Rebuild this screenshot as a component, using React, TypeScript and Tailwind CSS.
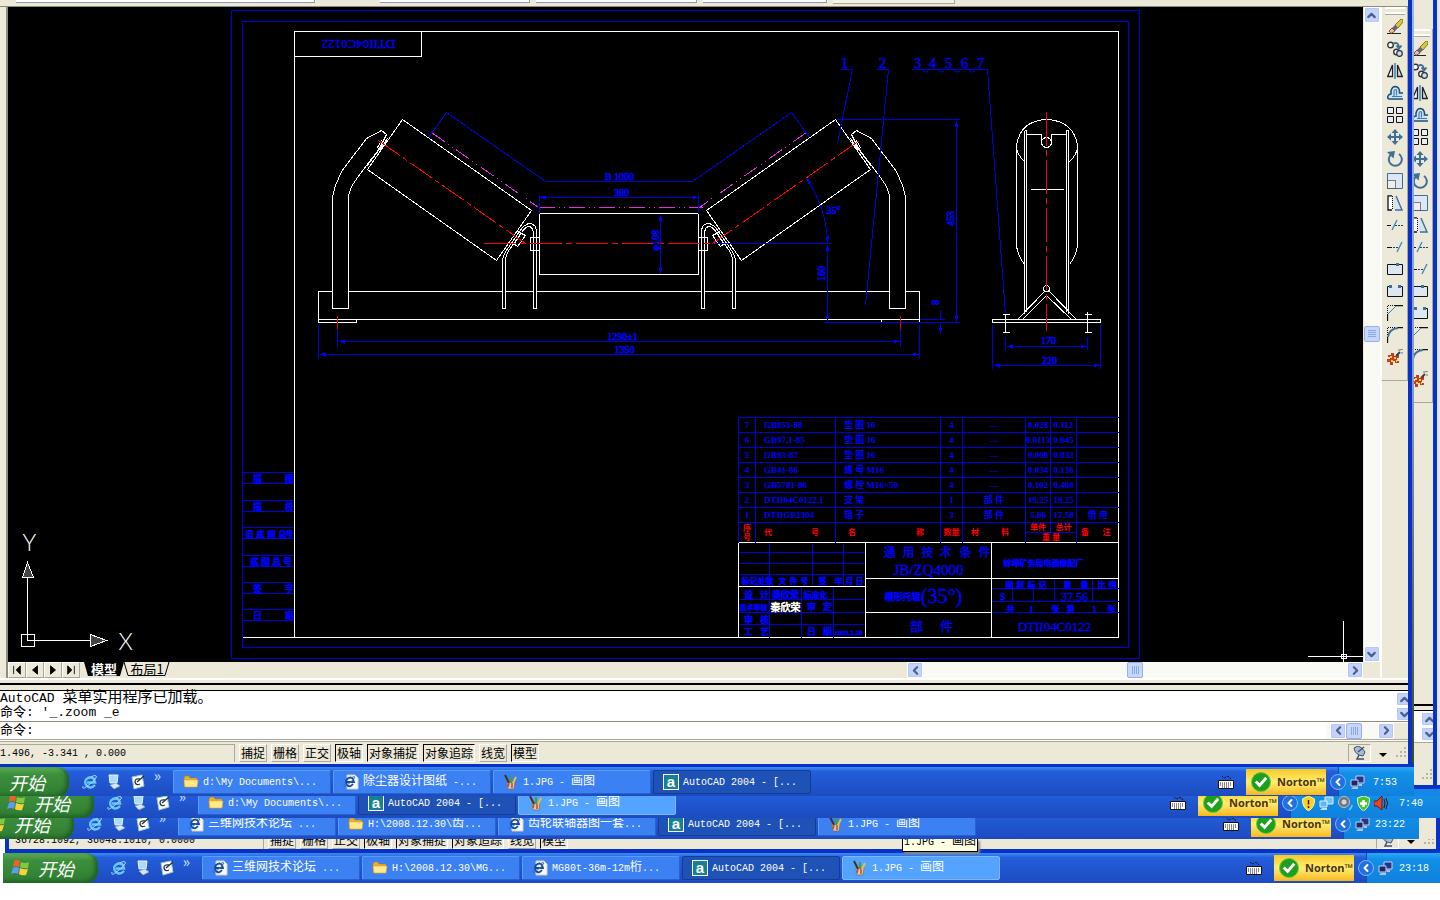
import type { ReactNode } from 'react'
import clsx from 'clsx'
import { ChevronDown, ChevronLeft, ChevronRight, ChevronUp } from 'lucide-react'

const BLUE = '#0000d8'

// Latin runs are set in a narrow mono, Chinese runs a little larger
function Mixed({ text }: { text: string }) {
  const runs = text.split(/([\u3000-\u9fff\uff00-\uffef]+)/).filter(Boolean)
  return (
    <span className="block whitespace-pre font-['Liberation_Mono','Noto_Sans_CJK_SC',monospace] text-xs leading-4">
      {runs.map((run, i) =>
        /[\u3000-\u9fff]/.test(run) ? (
          <span key={i}>{run}</span>
        ) : (
          <span key={i} className="text-[10px]">{run}</span>
        ),
      )}
    </span>
  )
}

/* ---------- CAD drawing ---------- */

type LabelProps = {
  x: number
  y: number
  size?: number
  rotate?: number
  fill?: string
  children: ReactNode
}

function Label({ x, y, size = 10, rotate, fill = '#0000ff', children }: LabelProps) {
  return (
    <text
      x={x}
      y={y}
      fontSize={size}
      fill={fill}
      stroke={fill}
      strokeWidth={size > 11 ? 0.3 : 0.6}
      textAnchor="middle"
      transform={rotate ? `rotate(${rotate} ${x} ${y})` : undefined}
    >
      {children}
    </text>
  )
}

function Spread({ xs, y, text, size = 9 }: { xs: number[]; y: number; text: string; size?: number }) {
  return (
    <>
      {xs.map((x, i) => (
        <Label key={x} x={x} y={y} size={size}>{text[i]}</Label>
      ))}
    </>
  )
}

// Left half of the carrier frame; the right half is its mirror image
function HalfFrame() {
  return (
    <g>
      <path stroke="#fff" d="M318 319H356V322H318Z" />
      <path stroke="#fff" fill="#000" d="M332 308V196L335 185L341 171L366 138L381 130L386 134L379 148L357 177L351 186L348 195V308Z" />
      <path stroke="#fff" fill="#000" d="M402 119L531 210L496 260L367 169Z" />
      <path stroke="#fff" d="M387 138L366 166M381 140L377 147L380 149L385 142" />
      <path stroke="#fff" fill="#000" d="M502 308V260Q503 253 508 247L519 231Q524 223 530 223Q536 224 536 232V308H533V234Q533 227 529 226Q525 226 521 232L509 249Q505 255 505 261V308Z" />
      <path stroke="#fff" d="M530 237H539V250H530ZM517 231L525 235L517 246L512 242M514 243L520 234" />
      <path stroke="#ff0000" strokeDasharray="26 4 5 4" d="M378 140L525 243" />
      <path stroke="#ff0000" d="M337 315V328" />
      <path stroke="#e030e0" strokeDasharray="16 4 1 4 1 4" d="M431 132L538 207" />
      <path stroke={BLUE} d="M428 137L446 112L545 181" />
      <path stroke={BLUE} d="M337 328V346M318 324V358" />
    </g>
  )
}

function FrontView() {
  return (
    <g fill="none">
      <path stroke="#fff" d="M318 291H919V319H318Z" />
      <path stroke="#fff" d="M539 213H698V274H539Z" />
      <HalfFrame />
      <g transform="translate(1237 0) scale(-1 1)">
        <HalfFrame />
      </g>
      <path stroke="#ff0000" strokeDasharray="32 4 6 4" d="M483 243H714" />
      <path stroke="#e030e0" strokeDasharray="16 4 1 4 1 4" d="M538 207H702" />
      <g stroke={BLUE}>
        <path d="M545 181H692M539 194V213M698 194V213M714 243H830M824 322H959M836 119H959M919 319H944" />
        <g markerStart="url(#arrow)" markerEnd="url(#arrow)">
          <path d="M539 197H698" />
          <path d="M660 214V273" />
          <path d="M827 244V321" />
          <path d="M956 120V321" />
          <path d="M338 341H899" />
          <path d="M319 354H918" />
          <path d="M806 178Q826 208 827 242" />
        </g>
        <path d="M940 309V318M940 323V333" markerEnd="url(#arrow)" />
        <path d="M840 69H852L837 143M876 69H888L865 305M911 69H987L1005 314" />
        <path d="M922 70l3 2l3 -2M938 70l3 2l3 -2M954 70l3 2l3 -2M969 70l3 2l3 -2" />
      </g>
      <Label x={619} y={179}>B 1000</Label>
      <Label x={621} y={195}>380</Label>
      <Label x={658} y={240} rotate={-90}>φ108</Label>
      <Label x={833} y={213}>35°</Label>
      <Label x={824} y={273} rotate={-90}>160</Label>
      <Label x={953} y={218} rotate={-90}>453</Label>
      <Label x={938} y={302} rotate={-90}>8</Label>
      <Label x={622} y={339}>1290±1</Label>
      <Label x={624} y={352}>1350</Label>
      <Spread xs={[844, 882, 917, 932, 948, 964, 980]} y={67} text="1234567" size={15} />
    </g>
  )
}

function SideView() {
  return (
    <g fill="none">
      <g stroke="#fff">
        <path d="M992 319H1100V322H992Z" />
        <path d="M1024 161Q1016 154 1016 145Q1020 120 1046 119Q1073 120 1077 145Q1077 154 1069 161" />
        <path d="M1016 145V245Q1017 255 1024 264M1077 145V245Q1076 255 1069 264" />
        <path d="M1024 130H1026V311M1024 130V313M1068 130H1066V311M1068 130V313" />
        <path d="M1026 134H1041V140M1066 134H1051V140M1030 189H1063" />
        <circle cx="1046" cy="142" r="5" />
        <circle cx="1046" cy="288" r="3" />
        <path d="M1044 291L1017 319M1046 295L1022 319M1046 295L1071 319M1049 291L1076 319" />
        <path d="M1005 314V332M1002 314H1009M1002 332H1009M1087 311V332M1084 314H1091M1084 332H1091" />
      </g>
      <path stroke="#f00020" strokeDasharray="34 4 6 4" d="M1046 111V330" />
      <g stroke={BLUE}>
        <path d="M1005 336V349M1087 336V349M992 324V368M1100 324V368" />
        <path d="M1006 346H1086" markerStart="url(#arrow)" markerEnd="url(#arrow)" />
        <path d="M993 365H1099" markerStart="url(#arrow)" markerEnd="url(#arrow)" />
      </g>
      <Label x={1048} y={343}>170</Label>
      <Label x={1049} y={363}>220</Label>
    </g>
  )
}

function TitleBlock() {
  return (
    <g fill="none">
      <g stroke={BLUE}>
        <path d="M738 552H865M738 563H865M738 574H865M738 599H865M738 612H865M738 624H865" />
        <path d="M769 543V637M812 543V586M843 543V586M801 586V637M833 586V637" />
        <path d="M991 588H1118M991 601H1118M991 612H1118M1054 578V601M1012 588V601M1033 588V601M1092 578V601" />
      </g>
      <path stroke="#fff" d="M738 542H1118M738 542V637M865 542V637M991 542V637M738 586H865M865 578H1118M865 612H991" />
      <Spread xs={[745, 753, 761, 769, 782, 793, 804, 822, 838, 849, 859]} y={583} text="标记处数文件号签年月日" size={8} />
      <Spread xs={[748, 764]} y={597} text="设计" />
      <Label x={785} y={597} size={9}>秦欣荣</Label>
      <Label x={815} y={597} size={8}>标准化</Label>
      <Label x={753} y={609} size={7}>技术审核</Label>
      <Spread xs={[811, 827]} y={609} text="审定" />
      <Spread xs={[748, 764]} y={622} text="审核" />
      <Spread xs={[748, 764, 811, 827]} y={634} text="工艺日期" />
      <Label x={848} y={634} size={7}>1993.2.28</Label>
      <Label x={785} y={610} size={10} fill="#fff">秦欣荣</Label>
      <Spread xs={[889, 908, 927, 945, 965, 984]} y={556} text="通用技术条件" size={12} />
      <Label x={928} y={574} size={15}>JB/ZQ4000</Label>
      <Label x={902} y={599} size={9}>槽形托辊</Label>
      <Label x={941} y={602} size={20}>(35°)</Label>
      <Spread xs={[916, 946]} y={630} text="部件" size={13} />
      <Label x={1043} y={565} size={8}>蚌埠矿务局电器修配厂</Label>
      <Spread xs={[1009, 1020, 1031, 1042, 1067, 1084, 1101, 1112]} y={587} text="图样标记重量比例" size={8} />
      <Label x={1002} y={599}>S</Label>
      <Label x={1074} y={600} size={12}>37.56</Label>
      <Spread xs={[1010, 1031, 1055, 1070, 1094, 1111]} y={611} text="共1张第1张" size={8} />
      <Label x={1054} y={630} size={13}>DTII04C0122</Label>
    </g>
  )
}

function SheetFrame() {
  const rows = [472, 500, 527, 555, 582, 609]
  return (
    <g fill="none">
      <g stroke={BLUE}>
        <path d="M231 10H1139V658H231Z" />
        <path d="M242 21H1128V647H242Z" />
        {rows.map((y) => (
          <path key={y} d={`M242 ${y}H294M242 ${y + 11}H294`} />
        ))}
      </g>
      <path stroke="#fff" d="M294 637V31H1118V637M242 637H1118M294 56H421V31" />
      <Label x={358} y={39} size={13} rotate={180}>DTII04C0122</Label>
      <Spread xs={[257, 289]} y={481} text="描图" />
      <Spread xs={[257, 289]} y={509} text="描校" />
      <Spread xs={[249, 260, 271, 282, 289]} y={536} text="旧底图总号" size={8} />
      <Spread xs={[254, 265, 276, 287]} y={564} text="底图总号" />
      <Spread xs={[257, 289]} y={591} text="签字" />
      <Spread xs={[257, 289]} y={618} text="日期" />
    </g>
  )
}

function UcsIcon() {
  return (
    <g stroke="#fff" fill="none">
      <path d="M21 634H34V646H21ZM27 577V640H90" />
      <path fill="#444" d="M27 562L22 577H33Z" />
      <path fill="#444" d="M90 634V646L106 640Z" />
      <text x="22" y="550" fontSize="23" fill="#fff" stroke="none" className="font-[Lato] font-light">Y</text>
      <text x="118" y="649" fontSize="23" fill="#fff" stroke="none" className="font-[Lato] font-light">X</text>
    </g>
  )
}

function Drawing() {
  return (
    <svg
      width="1355"
      height="655"
      viewBox="7.5 6.5 1355 655"
      shapeRendering="crispEdges"
      className="block font-['Liberation_Serif','Noto_Sans_CJK_SC',serif]"
    >
      <defs>
        <marker id="arrow" viewBox="0 0 6 4" refX="6" refY="2" markerWidth="6" markerHeight="4" orient="auto-start-reverse">
          <path d="M0 0L6 2L0 4Z" fill="#0000ff" />
        </marker>
      </defs>
      <SheetFrame />
      <FrontView />
      <SideView />
      <TitleBlock />
      <UcsIcon />
      <path stroke="#fff" fill="none" d="M1307 656H1362M1343 620V661M1341 654H1346V658H1341Z" />
    </svg>
  )
}

const parts = [
  ['7', 'GB853-88', '垫 圈 16', '4', '—', '0.028', '0.112', ''],
  ['6', 'GB97.1-85', '垫 圈 16', '4', '—', '0.0113', '0.045', ''],
  ['5', 'GB93-87', '垫 圈 16', '4', '—', '0.008', '0.032', ''],
  ['4', 'GB41-86', '螺 母 M16', '4', '—', '0.034', '0.136', ''],
  ['3', 'GB5781-86', '螺 栓 M16×50', '4', '—', '0.102', '0.408', ''],
  ['2', 'DTII04C0122.1', '支 架', '1', '部 件', '19.25', '19.25', ''],
  ['1', 'DTIIGP2304', '辊 子', '3', '部 件', '5.86', '17.58', '借 用'],
]

const colWidths = ['w-[17px]', 'w-[80px]', 'w-[105px]', 'w-[22px]', 'w-[63px]', 'w-[25px]', 'w-[26px]', 'w-[42px]']

function PartsList() {
  const head = 'border-x border-[#0000d8] p-0 font-bold'
  return (
    <table className="absolute left-[730px] top-[410px] w-[380px] table-fixed border-collapse font-['Liberation_Serif','Noto_Sans_CJK_SC',serif] text-[9px] font-bold leading-[10px] text-[#0000ff]">
      <colgroup>
        {colWidths.map((w, i) => <col key={i} className={w} />)}
      </colgroup>
      <tbody>
        {parts.map((row) => (
          <tr key={row[0]} className="h-[15px]">
            {row.map((cell, i) => (
              <td
                key={i}
                className={clsx(
                  'whitespace-nowrap border border-[#0000d8] py-0',
                  i === 1 || i === 2 ? 'px-2' : 'px-0 text-center',
                  i === 7 && 'border-r-0',
                )}
              >
                {cell}
              </td>
            ))}
          </tr>
        ))}
      </tbody>
      <tfoot className="text-[8px] leading-[9px] text-[#ff0000]">
        <tr className="h-[10px]">
          <th rowSpan={2} className={head}><span className="mx-auto block w-2">序号</span></th>
          <th rowSpan={2} className={head}><div className="flex justify-between px-2 pr-4"><span>代</span><span>号</span></div></th>
          <th rowSpan={2} className={head}><div className="flex justify-between px-3 pr-4"><span>名</span><span>称</span></div></th>
          <th rowSpan={2} className={head}>数量</th>
          <th rowSpan={2} className={head}><div className="flex justify-between px-2 pr-4"><span>材</span><span>料</span></div></th>
          <th className={head}>单件</th>
          <th className={head}>总计</th>
          <th rowSpan={2} className={head + ' border-r-0'}><div className="flex justify-between px-1 pr-2"><span>备</span><span>注</span></div></th>
        </tr>
        <tr className="h-[10px]">
          <th colSpan={2} className={head + ' border-t'}>重 量</th>
        </tr>
      </tfoot>
    </table>
  )
}

/* ---------- Modify toolbar ---------- */

const STEEL = '#3f6f95'

const tools: { name: string; icon: ReactNode }[] = [
  { name: 'Erase', icon: <><path d="M0 14.5H14" stroke="#222" /><path d="M14 0L8 6L11 9L16 3V0Z" fill="#d8c832" stroke="#665f20" strokeWidth=".8" /><path d="M8 6L5 9L8 12L11 9Z" fill="#667" /><path d="M5 9L2 12L4 14.500L8 12Z" fill="#f0b8a8" stroke="#633" strokeWidth=".8" /></> },
  { name: 'Copy', icon: <><circle cx="3.5" cy="4" r="2.800" stroke="#333" fill="#fff" strokeWidth="1.400" /><circle cx="9.500" cy="11" r="2.800" stroke="#333" fill="#fff" strokeWidth="1.400" /><circle cx="12.500" cy="12.500" r="2.800" stroke="#234" fill="#cde" strokeWidth="1.200" /><path d="M6 3Q11 0 12 6M9.500 4.500L12 7.500L14.500 4.500" stroke={STEEL} strokeWidth="1.800" /></> },
  { name: 'Mirror', icon: <><path d="M5.500 2V13.500H.7Z" stroke="#222" fill="#fff" strokeWidth="1.300" /><path d="M10.500 2V13.500H15.300Z" stroke="#222" fill="#cfe0f0" strokeWidth="1.300" /><path d="M8 0V16" stroke="#3a80c0" strokeWidth="1.500" /></> },
  { name: 'Offset', icon: <><path d="M16 14H2Q0 13 1 11Q2 9 4 9V6Q5 1.500 8.500 1.500Q12 2 12.500 6V8H16" stroke="#24506e" strokeWidth="1.600" fill="#cfe4f5" /><path d="M15 11.500H5M7 11V6Q8 4 9.500 5V10.500" stroke="#3a80c0" strokeWidth="1.200" /></> },
  { name: 'Array', icon: <><path d="M.5 .5H6.500V6.500H.5ZM9.500 .5H15.500V6.500H9.500ZM.5 9.500H6.500V15.500H.5ZM9.500 9.500H15.500V15.500H9.500Z" stroke="#111" fill="#e8eef6" /></> },
  { name: 'Move', icon: <><path d="M8 2V14M2 8H14" stroke={STEEL} strokeWidth="2" /><path d="M8 0L4.500 4H11.500ZM8 16L4.500 12H11.500ZM0 8L4 4.500V11.500ZM16 8L12 4.500V11.500Z" fill={STEEL} /></> },
  { name: 'Rotate', icon: <><path d="M4 3.500A6.500 6.500 0 1 0 12 3" stroke={STEEL} strokeWidth="2" /><path d="M0 1L8 0L6.500 7.500Z" fill={STEEL} /></> },
  { name: 'Scale', icon: <><path d="M.5 .5H15.500V15.500H.5Z" stroke={STEEL} fill="#dbe7f4" /><path d="M.5 7.500H8.500V15.500H.5Z" fill="#eee" stroke="#111" strokeDasharray="1 1" /></> },
  { name: 'Stretch', icon: <><path d="M5 .8H1V15H5" stroke="#111" strokeWidth="1.300" fill="#fff" /><path d="M5.500 1V15" stroke="#111" strokeDasharray="1 1" /><path d="M7 1H9L15 15H7Z" fill="#d5e4f2" /><path d="M9 1L15 15H8" stroke={STEEL} strokeWidth="1.400" /></> },
  { name: 'Trim', icon: <><path d="M0 8.500H4" stroke="#111" /><path d="M5 13L10 3" stroke="#3a80c0" strokeWidth="1.300" /><path d="M8 8.500H16" stroke="#245" strokeDasharray="2 1" /></> },
  { name: 'Extend', icon: <><path d="M0 8.500H5" stroke="#111" /><path d="M6 8.500H11" stroke="#245" strokeDasharray="2 1" /><path d="M10 13L15 3" stroke="#3a80c0" strokeWidth="1.300" /></> },
  { name: 'Break at point', icon: <><path d="M.5 3.500H15.500V13.500H.5Z" stroke="#111" fill="#dde7f2" /><path d="M9 2H12V5H9Z" fill={STEEL} /></> },
  { name: 'Break', icon: <><path d="M4 3.500H.5V13.500H15.500V3.500H12" stroke="#111" fill="#dde7f2" /><path d="M2 2H5V5H2ZM11 2H14V5H11Z" fill={STEEL} /></> },
  { name: 'Chamfer', icon: <><path d="M.5 16V9M8 .5H16" stroke="#111" strokeWidth="1.300" /><path d="M.5 8V.5H8" stroke="#111" strokeDasharray="1 1" /><path d="M1 9L9 1" stroke="#3a80c0" /></> },
  { name: 'Fillet', icon: <><path d="M.5 16V10M10 .5H16" stroke="#111" strokeWidth="1.300" /><path d="M.5 8V.5H8" stroke="#111" strokeDasharray="1 1" /><path d="M1 10Q2 2 11 1" stroke={STEEL} strokeWidth="2" /></> },
  { name: 'Explode', icon: <><path d="M1 6H4V4H7V7H10V5H12V9H10V12H12V14H8V12H6V16H3V13H0V10H3V8H1Z" fill="#c83c20" /><path d="M3 7H5V9H3ZM7 8H9V10H7ZM4 11H6V13H4ZM9 11H10V13H9Z" fill="#ffd040" /><path d="M9 7L13 3" stroke="#345" strokeWidth="2" /><path d="M13 1L16 0M15 3V5M12 2V0" stroke="#678" /></> },
]

function ModifyToolbar() {
  return (
    <div className="flex w-[26px] shrink-0 flex-col items-center border-b border-r border-[#aca899] pb-3">
      <div className="mb-[2px] h-[7px] w-[20px] border-y-2 border-white shadow-[0_1px_0_#aca899]" />
      {tools.map((tool) => (
        <button key={tool.name} type="button" aria-label={tool.name} className="flex h-[22px] w-[22px] items-center justify-center">
          <svg width="16" height="16" viewBox="0 0 16 16" fill="none">{tool.icon}</svg>
        </button>
      ))}
    </div>
  )
}

/* ---------- Scroll bars ---------- */

const arrows = { up: ChevronUp, down: ChevronDown, left: ChevronLeft, right: ChevronRight }

function ArrowButton({ dir, small }: { dir: keyof typeof arrows; small?: boolean }) {
  const Icon = arrows[dir]
  return (
    <button
      type="button"
      aria-label={`Scroll ${dir}`}
      className={clsx(
        'flex w-4 shrink-0 items-center justify-center rounded-[2px] border border-white bg-[#c3d3fd] shadow-[0_0_0_1px_#b4c8f6_inset]',
        small ? 'h-[14px]' : 'h-4',
      )}
    >
      <Icon size={13} strokeWidth={4} color="#4d6185" />
    </button>
  )
}

function Thumb({ vertical }: { vertical?: boolean }) {
  return (
    <div className="flex h-4 w-4 shrink-0 items-center justify-center rounded-[2px] border border-[#98b0e8] bg-[#c6d6fe]">
      <svg width="8" height="8" viewBox="0 0 8 8" className={vertical ? '' : 'rotate-90'}>
        <path d="M0 .5H8M0 2.500H8M0 4.500H8M0 6.500H8" stroke="#8ca8e8" />
      </svg>
    </div>
  )
}

/* ---------- Status bar ---------- */

const modes = [
  { label: '捕捉', on: false },
  { label: '栅格', on: false },
  { label: '正交', on: false },
  { label: '极轴', on: true },
  { label: '对象捕捉', on: true },
  { label: '对象追踪', on: true },
  { label: '线宽', on: false },
  { label: '模型', on: true },
]

function Grip() {
  return (
    <svg width="12" height="12" viewBox="0 0 12 12" fill="#b8b4a2">
      <path d="M9 0h2v2h-2zM9 4h2v2h-2zM5 4h2v2h-2zM9 8h2v2h-2zM5 8h2v2h-2zM1 8h2v2h-2z" />
    </svg>
  )
}

type StatusBarProps = { coords: string; boxClass: string; compact?: boolean }

function StatusBar({ coords, boxClass, compact }: StatusBarProps) {
  return (
    <div className={clsx('flex w-full shrink-0 items-center bg-[#ece9d8]', compact ? 'h-[18px]' : 'h-[22px]')}>
      <div className={clsx('mr-1 flex h-[18px] items-center border-r border-t border-[#aca899]', boxClass)}>
        <Mixed text={coords} />
      </div>
      <div className="flex gap-1">
        {modes.map((m) => (
          <button
            key={m.label}
            type="button"
            aria-pressed={m.on}
            className={clsx(
              "h-[18px] border px-px font-['Noto_Sans_CJK_SC',sans-serif] text-xs leading-4 text-black",
              m.on ? 'border-b-white border-l-black border-r-white border-t-black' : 'border-b-[#aca899] border-l-white border-r-[#aca899] border-t-white',
            )}
          >
            {m.label}
          </button>
        ))}
      </div>
      <div className="ml-auto flex items-center gap-2 pr-px">
        <button type="button" aria-label="Communication center" className="flex h-[18px] w-[23px] items-center justify-center border border-[#aca899] border-b-white border-r-white">
          <svg width="14" height="14" viewBox="0 0 14 14" fill="none">
            <path d="M1 2Q2 9 10 10L12 6Q9 1 5 0Z" fill="#a8bbd2" stroke="#41506c" />
            <path d="M5 6L11 1M6 9L4 13H11" stroke="#41506c" strokeWidth="1.500" />
          </svg>
        </button>
        <svg width="8" height="4" viewBox="0 0 8 4" className="mt-1"><path d="M0 0H8L4 4Z" /></svg>
        <Grip />
      </div>
    </div>
  )
}

/* ---------- Taskbars ---------- */

function FolderIcon() {
  return (
    <svg width="16" height="14" viewBox="0 0 16 14" className="shrink-0">
      <path d="M1 3L2 1H6L7 3H14V12H1Z" fill="#e8b030" stroke="#a87818" strokeWidth=".5" />
      <path d="M1 5H15L14 12H2Z" fill="#ffe98a" stroke="#d8a838" strokeWidth=".6" />
    </svg>
  )
}

function IeIcon({ page }: { page?: boolean }) {
  if (page) {
    return (
      <svg width="16" height="16" viewBox="0 0 16 16" fill="none" className="shrink-0">
        <path d="M4 1H12L15 4V15H4Z" fill="#f8f8f2" stroke="#d0d0c4" />
        <path d="M10 10Q7 14 4 11Q2 8 4 5Q8 2 10 5L11 8H4" stroke="#174a9c" strokeWidth="1.800" />
        <path d="M1 11Q0 14 4 11Q10 7 12 3Q11 2 8 4" stroke="#2f6dc0" />
      </svg>
    )
  }
  return (
    <svg width="16" height="16" viewBox="0 0 16 16" fill="none">
      <path d="M13 11Q9 15.500 5 12Q2 9 4 5.500Q8 1.500 12 5L13 8.500H5" stroke="#6ac4ff" strokeWidth="2.400" />
      <path d="M1 12Q0 16 4 13Q12 8 14.500 3Q14 0 9 3" stroke="#a4dcff" />
    </svg>
  )
}

function PaintIcon() {
  return (
    <svg width="16" height="16" viewBox="0 0 16 16" className="shrink-0">
      <path d="M4 8H12L11 15H5Z" fill="#d8c8b0" stroke="#806040" strokeWidth=".6" />
      <path d="M6 9L2 1" stroke="#483020" strokeWidth="2" />
      <path d="M8 9V2" stroke="#40a040" strokeWidth="2" />
      <path d="M10 9L13 3" stroke="#e8c040" strokeWidth="2" />
      <path d="M6 9L5 13M9 9V14" stroke="#c84828" strokeWidth="1.500" />
    </svg>
  )
}

function CadIcon() {
  return (
    <span className="flex h-4 w-4 shrink-0 items-center justify-center border border-white bg-[#168096] pb-[2px] font-['Liberation_Sans',sans-serif] text-[15px] font-bold leading-none text-white">
      a
    </span>
  )
}

function XpFlag() {
  return (
    <svg width="19" height="18" viewBox="0 0 19 18">
      <path d="M3 2Q6 0 9 2L8 8Q5 6 2 8Z" fill="#f0602c" />
      <path d="M10 3Q14 5 18 3L17 9Q13 10 9 8Z" fill="#84c840" />
      <path d="M2 9Q5 7 8 9L7 15Q4 13 0 15Z" fill="#5a9cf8" />
      <path d="M9 9Q13 11 17 10L15 16Q11 17 8 15Z" fill="#fcd038" />
    </svg>
  )
}

function DesktopIcon() {
  return (
    <svg width="16" height="16" viewBox="0 0 16 16">
      <path d="M3 1H12L11 9H4Z" fill="#a8dcff" stroke="#e8f4ff" />
      <path d="M4 11L10 9L14 12L8 15Z" fill="#d8e4f4" stroke="#8ab" strokeWidth=".6" />
    </svg>
  )
}

function NotesIcon() {
  return (
    <svg width="16" height="16" viewBox="0 0 16 16" fill="none">
      <path d="M2 3L12 1L14 12L4 15Z" fill="#fff" stroke="#9cc" />
      <path d="M10 5Q5 4 5 8Q6 12 10 10M7 8L14 2" stroke="#234" strokeWidth="1.300" />
    </svg>
  )
}

function KeyboardIcon() {
  return (
    <svg width="16" height="14" viewBox="0 0 16 14" fill="none">
      <path d="M4 1Q6 4 8 2T13 4" stroke="#111" strokeDasharray="2 1" />
      <path d="M.5 5.500H15.500V13.500H.5Z" fill="#fff" stroke="#111" />
      <path d="M2 8H14M2 10H14M4 12H12" stroke="#111" strokeDasharray="1 1" />
    </svg>
  )
}

function NetIcon() {
  return (
    <svg width="15" height="15" viewBox="0 0 15 15">
      <path d="M6 1H14V8H6Z" fill="#283488" stroke="#c8d0ec" />
      <path d="M1 5H8V11H1Z" fill="#20286c" stroke="#c8d0ec" />
      <path d="M3 12H8V14H1ZM9 9H12V11H9Z" fill="#b8c0e0" />
    </svg>
  )
}

const extraTray = [
  <svg key="warn" width="13" height="15" viewBox="0 0 13 15"><path d="M6.500 0L12.500 3Q13 11 6.500 15Q0 11 .5 3Z" fill="#ffd020" stroke="#fff4b0" /><path d="M6.500 4V8.500M6.500 10V12" stroke="#322" strokeWidth="1.500" /></svg>,
  <svg key="net" width="15" height="15" viewBox="0 0 15 15"><path d="M6 1H14V8H6Z" fill="#70c4f8" stroke="#dcf0ff" /><path d="M1 5H8V11H1Z" fill="#60b4f0" stroke="#dcf0ff" /><path d="M3 12H8V14H1Z" fill="#c8e0f0" /></svg>,
  <svg key="vol" width="15" height="15" viewBox="0 0 15 15"><circle cx="6" cy="6" r="5.500" fill="#707478" stroke="#c0c4c8" /><circle cx="6" cy="6" r="2.500" fill="#d4d8dc" /><path d="M11 14Q14 12 14 9" stroke="#6cf" fill="none" strokeWidth="1.500" /></svg>,
  <svg key="guard" width="13" height="15" viewBox="0 0 13 15"><path d="M6.500 0L12.500 2Q13 11 6.500 15Q0 11 .5 2Z" fill="#48c030" stroke="#d8f8c8" /><path d="M6.500 4V11M3 7.500H10" stroke="#fff" strokeWidth="2.500" /></svg>,
  <svg key="sound" width="15" height="15" viewBox="0 0 15 15"><path d="M0 5H3L8 0V14L3 10H0Z" fill="#e04828" stroke="#701808" /><path d="M10 3Q12 7 10 12M12 2Q15 7 12 13" stroke="#311" fill="none" /></svg>,
]

type Task = { kind: 'folder' | 'ie' | 'paint' | 'cad'; title: string; state?: 'active' | 'hover' }

function TaskIcon({ kind }: { kind: Task['kind'] }) {
  if (kind === 'folder') return <FolderIcon />
  if (kind === 'ie') return <IeIcon page />
  if (kind === 'paint') return <PaintIcon />
  return <CadIcon />
}

type TaskbarProps = { tasks: Task[]; time: string; trayClass: string; shift?: string; tray?: ReactNode }

function Taskbar({ tasks, time, trayClass, shift, tray }: TaskbarProps) {
  return (
    <div className="flex h-[30px] w-full shrink items-stretch overflow-hidden bg-linear-to-b from-[#3f8cf0] via-[#245edb] via-15% to-[#1c4bc0] text-white">
      <div className={clsx('flex shrink-0 items-stretch', shift)}>
        <button
          type="button"
          className="flex w-[95px] items-center gap-2 rounded-r-xl bg-linear-to-b from-[#5eac56] via-[#3c8f3c] via-25% to-[#2f7d32] pl-2 font-['Noto_Sans_CJK_SC',sans-serif] text-lg italic leading-none shadow-[inset_-3px_-2px_4px_#1f5f24]"
        >
          <XpFlag />
          开始
        </button>
        <div className="flex w-[104px] items-center gap-2 pl-[13px]">
          <button type="button" aria-label="Internet Explorer"><IeIcon /></button>
          <button type="button" aria-label="Show desktop"><DesktopIcon /></button>
          <button type="button" aria-label="Notes"><NotesIcon /></button>
          <span className="mb-3 text-sm leading-none text-[#bcd6ff]">»</span>
        </div>
        {tasks.map((task, i) => (
          <button
            key={i}
            type="button"
            className={clsx(
              'my-[3px] mr-[2px] flex w-[158px] items-center gap-1 rounded-[2px] border pl-[9px] text-left',
              !task.state && 'border-[#5a9bfa] border-b-[#2a62cc] border-r-[#2a62cc] bg-[#3c81f3]',
              task.state === 'active' && 'border-[#153c94] bg-[#1e52b7]',
              task.state === 'hover' && 'border-[#7ab8ff] bg-[#53a3ff]',
            )}
          >
            <TaskIcon kind={task.kind} />
            <Mixed text={task.title} />
          </button>
        ))}
      </div>
      <div className="ml-auto flex shrink-0 items-center">
        <KeyboardIcon />
        <button
          type="button"
          className="ml-3 mr-3 flex h-[26px] w-20 items-center gap-[6px] bg-linear-to-b from-[#f8c818] via-[#ffee70] to-[#f8b810] pl-[5px] font-['Open_Sans',sans-serif] text-[11px] font-bold text-[#4a3208]"
        >
          <svg width="20" height="20" viewBox="0 0 21 21" className="shrink-0">
            <circle cx="10.500" cy="10.500" r="10" fill="#1ea01e" stroke="#68c848" />
            <path d="M5 10L9 14L16 6" stroke="#fff" strokeWidth="3" fill="none" />
          </svg>
          Norton™
        </button>
        <div className={clsx('relative flex h-full items-center gap-1 border-l border-[#0c4fb8] bg-linear-to-b from-[#2ca8f4] via-[#1290e8] via-20% to-[#1080dc] pl-[11px]', trayClass)}>
          <button type="button" aria-label="Show hidden icons" className="absolute -left-[9px] flex h-4 w-4 items-center justify-center rounded-full border border-[#7cb8f8] bg-[#2070e0]">
            <ChevronLeft size={12} strokeWidth={4} className="shrink-0" />
          </button>
          {tray ?? <NetIcon />}
          <span className="ml-auto"><Mixed text={time} /></span>
        </div>
      </div>
    </div>
  )
}

const tasks753: Task[] = [
  { kind: 'folder', title: 'd:\\My Documents\\...' },
  { kind: 'ie', title: '除尘器设计图纸 -...' },
  { kind: 'paint', title: '1.JPG - 画图' },
  { kind: 'cad', title: 'AutoCAD 2004 - [...', state: 'active' },
]

const tasks740: Task[] = [
  { kind: 'folder', title: 'd:\\My Documents\\...' },
  { kind: 'cad', title: 'AutoCAD 2004 - [...', state: 'active' },
  { kind: 'paint', title: '1.JPG - 画图', state: 'hover' },
]

const tasks2322: Task[] = [
  { kind: 'ie', title: '三维网技术论坛 ...' },
  { kind: 'folder', title: 'H:\\2008.12.30\\齿...' },
  { kind: 'ie', title: '齿轮联轴器图一套...' },
  { kind: 'cad', title: 'AutoCAD 2004 - [...', state: 'active' },
  { kind: 'paint', title: '1.JPG - 画图' },
]

const tasks2318: Task[] = [
  { kind: 'ie', title: '三维网技术论坛 ...' },
  { kind: 'folder', title: 'H:\\2008.12.30\\MG...' },
  { kind: 'ie', title: 'MG80t-36m-12m桁...' },
  { kind: 'cad', title: 'AutoCAD 2004 - [...', state: 'active' },
  { kind: 'paint', title: '1.JPG - 画图', state: 'hover' },
]

/* ---------- Windows ---------- */

const navPaths = ['M2 1V11M10 1L5 6L10 11Z', 'M9 1L3 6L9 11Z', 'M3 1L9 6L3 11Z', 'M2 1L7 6L2 11ZM10 1V11']
const navNames = ['First layout', 'Previous layout', 'Next layout', 'Last layout']

function LayoutTabs() {
  return (
    <div className="flex h-4 items-stretch">
      <div className="flex w-[899px] items-stretch">
        {navPaths.map((d, i) => (
          <button key={i} type="button" aria-label={navNames[i]} className="flex w-[18px] items-center justify-center border border-[#aca899] border-l-white border-t-white">
            <svg width="10" height="10" viewBox="0 0 12 12"><path d={d} fill="#000" stroke="#000" /></svg>
          </button>
        ))}
        <div className="ml-1 flex font-['Noto_Sans_CJK_SC',sans-serif] text-[13px] leading-[13px]">
          <button type="button" className="relative flex w-[40px] items-start justify-center font-bold text-white">
            <svg width="40" height="15" viewBox="0 0 40 15" className="absolute left-0 top-0"><path d="M0 0H40L36 14H4Z" /></svg>
            <span className="relative">模型</span>
          </button>
          <button type="button" className="relative flex w-[46px] items-start justify-center">
            <svg width="46" height="15" viewBox="0 0 46 15" fill="none" className="absolute left-0 top-0"><path d="M0 0L4 13.500H41L45 0" stroke="#000" /></svg>
            <span className="relative">布局1</span>
          </button>
        </div>
      </div>
      <div className="flex flex-1 items-center bg-[#fafaf5]">
        <ArrowButton dir="left" />
        <div className="flex-1" />
        <Thumb />
        <div className="w-[204px]" />
        <ArrowButton dir="right" />
      </div>
    </div>
  )
}

function TopStrip() {
  return (
    <div className="flex h-[7px] items-start border-b border-[#8f8c7e] bg-[#ece9d8] pl-4">
      <div className="mr-[65px] h-[3px] w-[299px] border-b border-r border-[#8a9ab0] bg-white" />
      <div className="mr-[6px] h-[3px] w-[150px] border-b border-r border-[#8a9ab0] bg-white" />
      <div className="mr-[6px] h-[3px] w-[161px] border-b border-r border-[#8a9ab0] bg-white" />
      <div className="mr-[6px] h-[3px] w-[124px] border-b border-r border-[#8a9ab0] bg-white" />
      <div className="h-[4px] w-[122px] border-b border-r border-[#aca899] bg-[#f4f2e6]" />
    </div>
  )
}

function CommandPane() {
  return (
    <div className="border-t border-black bg-white font-['Liberation_Mono','Noto_Sans_CJK_SC',monospace] text-[13px] text-black">
      <div className="flex h-[30px]">
        <div className="flex-1 pt-px leading-[14px]">
          <p className="h-[14px] whitespace-pre">AutoCAD <span className="text-[15px]">菜单实用程序已加载。</span></p>
          <p className="h-[14px] whitespace-pre">命令: '_.zoom _e</p>
        </div>
        <div className="flex w-3 flex-col gap-px overflow-hidden pt-px">
          <ArrowButton dir="up" small />
          <ArrowButton dir="down" small />
        </div>
      </div>
      <div className="flex h-[18px] items-center border-t border-[#8f8c7e]">
        <label htmlFor="command" className="leading-[14px]">命令:</label>
        <input id="command" type="text" className="h-4 flex-1 px-1 outline-none" />
        <div className="flex w-[82px] items-center bg-[#ece9d8]">
          <div className="flex w-[68px] items-center bg-[#fafaf5] pl-1">
            <ArrowButton dir="left" />
            <Thumb />
            <div className="flex-1" />
            <ArrowButton dir="right" />
          </div>
        </div>
      </div>
    </div>
  )
}

function MainWindow() {
  return (
    <div className="flex border-b-[3px] border-[#0831c8]">
      <div className="min-w-0 flex-1 bg-[#ece9d8]">
        <TopStrip />
        <div className="flex">
          <div className="w-2 shrink-0 border-r-2 border-[#8f8c7e]" />
          <div className="min-w-0 flex-1">
            <div className="relative overflow-hidden bg-black">
              <Drawing />
              <PartsList />
            </div>
            <LayoutTabs />
          </div>
          <div className="flex w-[19px] shrink-0 flex-col items-center border-r-2 border-white pb-4">
            <div className="flex flex-1 flex-col bg-[#fafaf5]">
              <ArrowButton dir="up" />
              <div className="h-[303px]" />
              <Thumb vertical />
              <div className="flex-1" />
              <ArrowButton dir="down" />
            </div>
          </div>
          <div className="w-[26px] shrink-0">
            <ModifyToolbar />
          </div>
        </div>
        <div className="h-[7px] border-b-2 border-t-2 border-b-black border-t-white" />
        <div className="h-[5px]" />
        <CommandPane />
        <div className="h-[3px] border-y border-[#aca899] bg-white" />
        <StatusBar coords="1.496, -3.341 , 0.000" boxClass="w-[235px]" />
      </div>
      <div className="w-1 shrink-0 bg-[#0831c8]" />
      <div className="w-[2px] shrink-0 bg-linear-to-b from-[#9cb4e8] via-[#8899cc] via-50% to-[#3a4c20]" />
    </div>
  )
}

// Sliver of the window lying behind the main one
function BackWindow() {
  return (
    <div className="flex w-[26px] shrink-0 flex-col bg-[#1488e4]">
      <div className="flex flex-1 border-b-4 border-[#0831c8] bg-[#dfe8f8]">
        <div className="flex w-[19px] flex-col overflow-hidden bg-[#ece9d8]">
          <div className="flex h-[706px] justify-end border-b-2 border-black pt-[29px]">
            <div><ModifyToolbar /></div>
          </div>
          <div className="h-[5px] border-b border-black" />
          <div className="flex h-[31px] flex-col items-end bg-white pt-px">
            <div className="flex w-3 flex-col gap-px overflow-hidden">
              <ArrowButton dir="up" small />
              <ArrowButton dir="down" small />
            </div>
          </div>
          <div className="flex flex-1 items-end justify-end border-t border-[#aca899] pb-1"><Grip /></div>
        </div>
        <div className="w-[4px] bg-[#0831c8]" />
      </div>
      <div className="h-[7px]" />
    </div>
  )
}

export default function App() {
  return (
    <div className="min-h-screen overflow-hidden bg-white">
      <div className="flex">
        <div className="min-w-0 flex-1">
          <MainWindow />
          <div className="flex h-[29px] items-start overflow-hidden">
            <Taskbar tasks={tasks753} time="7:53" shift="-ml-[26px]" trayClass="w-[76px] pr-[17px]" />
          </div>
        </div>
        <BackWindow />
      </div>
      <div className="flex h-[22px] items-end overflow-hidden">
        <Taskbar tasks={tasks740} time="7:40" shift="-ml-px" trayClass="w-[150px] pr-[17px]" tray={extraTray} />
      </div>
      <div className="flex h-[21px] items-end overflow-hidden">
        <Taskbar tasks={tasks2322} time="23:22" shift="-ml-[21px]" trayClass="w-[76px] pr-[14px]" />
        <div className="h-full w-[21px] shrink-0 border-r-4 border-[#0831c8] bg-[#ece9d8]" />
      </div>
      <div className="relative ml-[5px]">
        <div className="flex h-[14px] items-end overflow-hidden border-x-4 border-b-4 border-[#0831c8]">
          <StatusBar coords="36728.1092, 36048.1010, 0.0000" boxClass="w-[255px] pl-[6px]" compact />
        </div>
        <div className="absolute left-[897px] top-0 flex h-[13px] items-end overflow-hidden border border-t-0 border-black bg-[#ffffe1] px-px shadow-[2px_2px_2px_#888]">
          <Mixed text="1.JPG - 画图" />
        </div>
      </div>
      <div className="pl-[3px]">
        <Taskbar tasks={tasks2318} time="23:18" trayClass="w-[74px] pr-[11px]" />
      </div>
    </div>
  )
}
